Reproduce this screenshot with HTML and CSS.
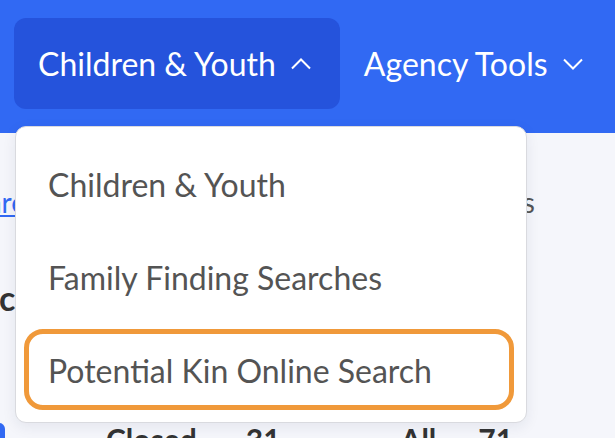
FILE: index.html
```html
<!DOCTYPE html>
<html lang="en">
<head>
<meta charset="utf-8">
<title>Navigation</title>
<link rel="stylesheet" href="styles.css">
</head>
<body>
<header class="topbar">
  <nav class="nav">
    <div class="nav-item nav-item--open">
      <button class="nav-btn nav-btn--active">
        <span>Children &amp; Youth</span>
        <svg class="chev" width="22" height="12" viewBox="0 0 22 12"><path d="M2 10.5 L11 1.5 L20 10.5" fill="none" stroke="#fff" stroke-width="2"/></svg>
      </button>
      <ul class="dropdown">
        <li class="dd-item">Children &amp; Youth</li>
        <li class="dd-item">Family Finding Searches</li>
        <li class="dd-item dd-item--highlight">Potential Kin Online Search</li>
      </ul>
    </div>
    <div class="nav-item">
      <button class="nav-btn">
        <span>Agency Tools</span>
        <svg class="chev" width="22" height="12" viewBox="0 0 22 12"><path d="M2 1.5 L11 10.5 L20 1.5" fill="none" stroke="#fff" stroke-width="2"/></svg>
      </button>
    </div>
  </nav>
</header>
<main class="page">
  <div class="crumbs">
    <span class="crumb-box"><a class="crumb-link" href="#">Foster Care</a></span>
    <span class="crumb-current">Potential Kin Online Searches</span>
  </div>
  <h1 class="title">cases</h1>
  <div class="tabs">
    <span class="tab-marker"></span>
    <span class="tab tab--closed"><span>Closed</span><span>31</span></span>
    <span class="tab tab--all"><span>All</span><span>71</span></span>
  </div>
</main>
</body>
</html>
```
FILE: styles.css
```css
* { box-sizing: border-box; }
html, body { margin: 0; padding: 0; }
body {
  width: 615px;
  height: 438px;
  overflow: hidden;
  background: #f5f6fb;
  font-family: Lato, "Noto Sans", sans-serif;
}
.topbar {
  background: #3169f3;
  height: 133px;
  padding-top: 18px;
}
.nav {
  display: flex;
  padding-left: 14px;
}
.nav-item { position: relative; }
.nav-btn {
  display: flex;
  align-items: center;
  gap: 14px;
  height: 91px;
  padding: 0 28px 0 24px;
  border: 0;
  border-radius: 12px;
  background: transparent;
  color: #fff;
  font-family: Lato, "Noto Sans", sans-serif;
  font-size: 32px;
  cursor: pointer;
}
.nav-btn--active { background: #2553dc; }
.chev { display: block; }
.dropdown {
  position: absolute;
  top: 108px;
  left: 1px;
  width: 512px;
  margin: 0;
  padding: 16px 12px 12px 8px;
  list-style: none;
  background: #fff;
  border: 1px solid #d9dadf;
  border-radius: 11px;
  box-shadow: 0 4px 14px rgba(30, 40, 80, 0.08);
  display: flex;
  flex-direction: column;
  gap: 12px;
  z-index: 5;
}
.dd-item {
  height: 81px;
  display: flex;
  align-items: center;
  padding-left: 19px;
  padding-top: 2px;
  color: #545454;
  font-size: 32px;
  border: 5px solid transparent;
  border-radius: 19px;
}
.dd-item--highlight { border-color: #f0993a; }
.crumbs {
  display: flex;
  justify-content: space-between;
  align-items: baseline;
  padding-right: 80px;
  padding-top: 52px;
  font-size: 28px;
}
.crumb-box {
  width: 150px;
  margin-left: -124px;
  text-align: right;
}
.crumb-link { color: #3169f3; text-decoration: underline; }
.crumb-current { color: #555; }
.title {
  margin: 62px 0 0 -1px;
  font-size: 34px;
  font-weight: 700;
  color: #333;
  line-height: 1;
}
.tabs {
  display: flex;
  align-items: flex-start;
  margin-top: 109px;
  font-size: 30px;
  font-weight: 700;
  color: #333;
  line-height: 1;
}
.tab-marker {
  width: 16px;
  height: 30px;
  margin-left: -11px;
  margin-top: -1px;
  border-radius: 6px;
  background: #3169f3;
}
.tab { display: flex; gap: 49px; }
.tab--closed { margin-left: 101px; }
.tab--all { margin-left: 120px; gap: 42px; }
```
